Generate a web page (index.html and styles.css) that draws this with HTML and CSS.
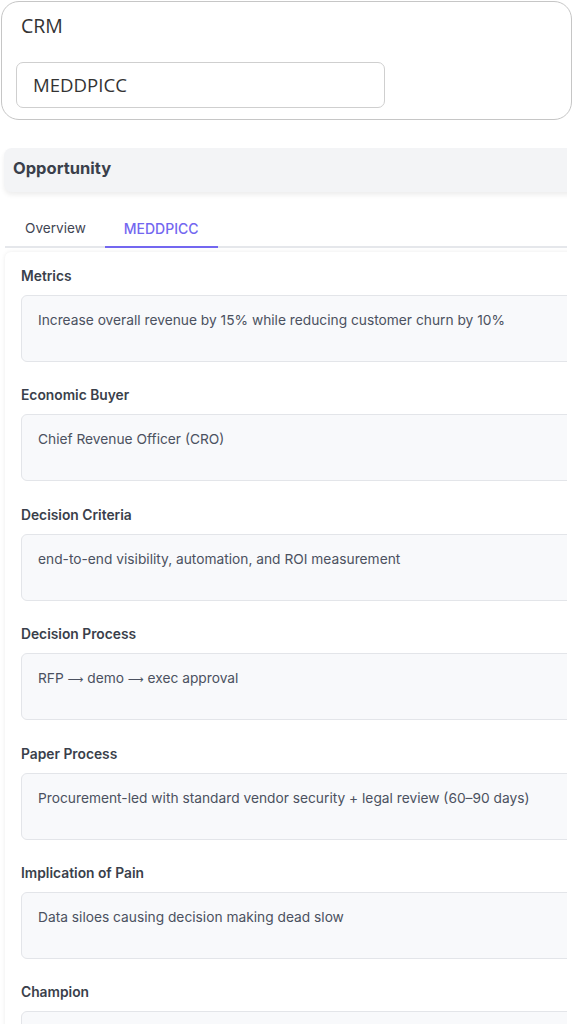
FILE: index.html
```html
<!DOCTYPE html>
<html lang="en">
<head>
<meta charset="utf-8">
<title>CRM - MEDDPICC</title>
<link rel="stylesheet" href="styles.css">
</head>
<body>
<div class="crm-card">
  <div class="crm-title">CRM</div>
  <div class="crm-input">MEDDPICC</div>
</div>

<div class="viewport">
  <div class="panel">
    <div class="opp-bar">Opportunity</div>
    <div class="tabs">
      <div class="tab">Overview</div>
      <div class="tab active">MEDDPICC</div>
    </div>
    <div class="fields">
      <div class="field">
        <div class="label">Metrics</div>
        <div class="box">Increase overall revenue by 15% while reducing customer churn by 10%</div>
      </div>
      <div class="field">
        <div class="label">Economic Buyer</div>
        <div class="box">Chief Revenue Officer (CRO)</div>
      </div>
      <div class="field">
        <div class="label">Decision Criteria</div>
        <div class="box">end-to-end visibility, automation, and ROI measurement</div>
      </div>
      <div class="field">
        <div class="label">Decision Process</div>
        <div class="box">RFP <span class="arrow">⟶</span> demo <span class="arrow">⟶</span> exec approval</div>
      </div>
      <div class="field">
        <div class="label">Paper Process</div>
        <div class="box">Procurement-led with standard vendor security + legal review (60–90 days)</div>
      </div>
      <div class="field">
        <div class="label">Implication of Pain</div>
        <div class="box">Data siloes causing decision making dead slow</div>
      </div>
      <div class="field">
        <div class="label">Champion</div>
        <div class="box"></div>
      </div>
    </div>
  </div>
</div>
</body>
</html>
```

FILE: styles.css
```css
html, body {
  margin: 0;
  padding: 0;
  background: #ffffff;
}

body {
  font-family: "Open Sans", "Noto Sans", sans-serif;
  height: 1024px;
  overflow: hidden;
}

.crm-card {
  margin: 1px 1px 0 1px;
  border: 1px solid #c6c6c6;
  border-radius: 18px;
  box-sizing: border-box;
  height: 119px;
  padding: 11px 0 0 14px;
}

.crm-title {
  font-size: 19.5px;
  line-height: 26px;
  color: #333333;
  padding-left: 5px;
}

.crm-input {
  margin-top: 23px;
  width: 369px;
  height: 46px;
  box-sizing: border-box;
  border: 1px solid #cfcfcf;
  border-radius: 7px;
  font-size: 18.6px;
  line-height: 44px;
  color: #333333;
  padding-left: 16px;
}

.viewport {
  width: 567px;
  overflow: hidden;
  margin-top: 28px;
  padding-bottom: 40px;
}

.panel {
  width: 700px;
  padding-left: 4px;
  font-family: "Inter", "Noto Sans", sans-serif;
  color: #374151;
}

.opp-bar {
  height: 44px;
  background: #f3f4f6;
  border-radius: 8px;
  box-shadow: 0 3px 5px rgba(0, 0, 0, 0.07);
  font-size: 16.5px;
  font-weight: 700;
  line-height: 40px;
  padding-left: 9px;
  color: #3a3f4b;
}

.tabs {
  display: flex;
  margin-top: 19px;
  margin-left: 1px;
  border-bottom: 2px solid #e5e7eb;
}

.tab {
  padding: 0 19px 0 19px;
  font-size: 13.6px;
  line-height: 35px;
  color: #3f4553;
  margin-bottom: -2px;
  border-bottom: 2px solid transparent;
}

.tab:first-child {
  padding-left: 20px;
}

.tab.active {
  color: #7367f0;
  font-weight: 500;
  font-size: 14px;
  border-bottom-color: #7367f0;
}

.fields {
  margin-top: 4px;
  margin-left: 1px;
  background: #ffffff;
  box-shadow: 0 0 4px rgba(0, 0, 0, 0.08);
  border-radius: 6px 0 0 0;
  padding: 14px 0 20px 16px;
}

.field {
  margin-bottom: 23.4px;
}

.label {
  font-size: 13.8px;
  font-weight: 600;
  line-height: 20px;
  color: #3a3f4b;
  margin-bottom: 9px;
}

.box {
  height: 67px;
  box-sizing: border-box;
  background: #f8f9fb;
  border: 1px solid #e3e5e9;
  border-radius: 6px;
  padding: 14px 16px 0 16px;
  font-size: 13.75px;
  line-height: 20px;
  color: #4b5160;
}

.arrow {
  font-family: "DejaVu Sans", sans-serif;
  font-size: 11px;
}
```
